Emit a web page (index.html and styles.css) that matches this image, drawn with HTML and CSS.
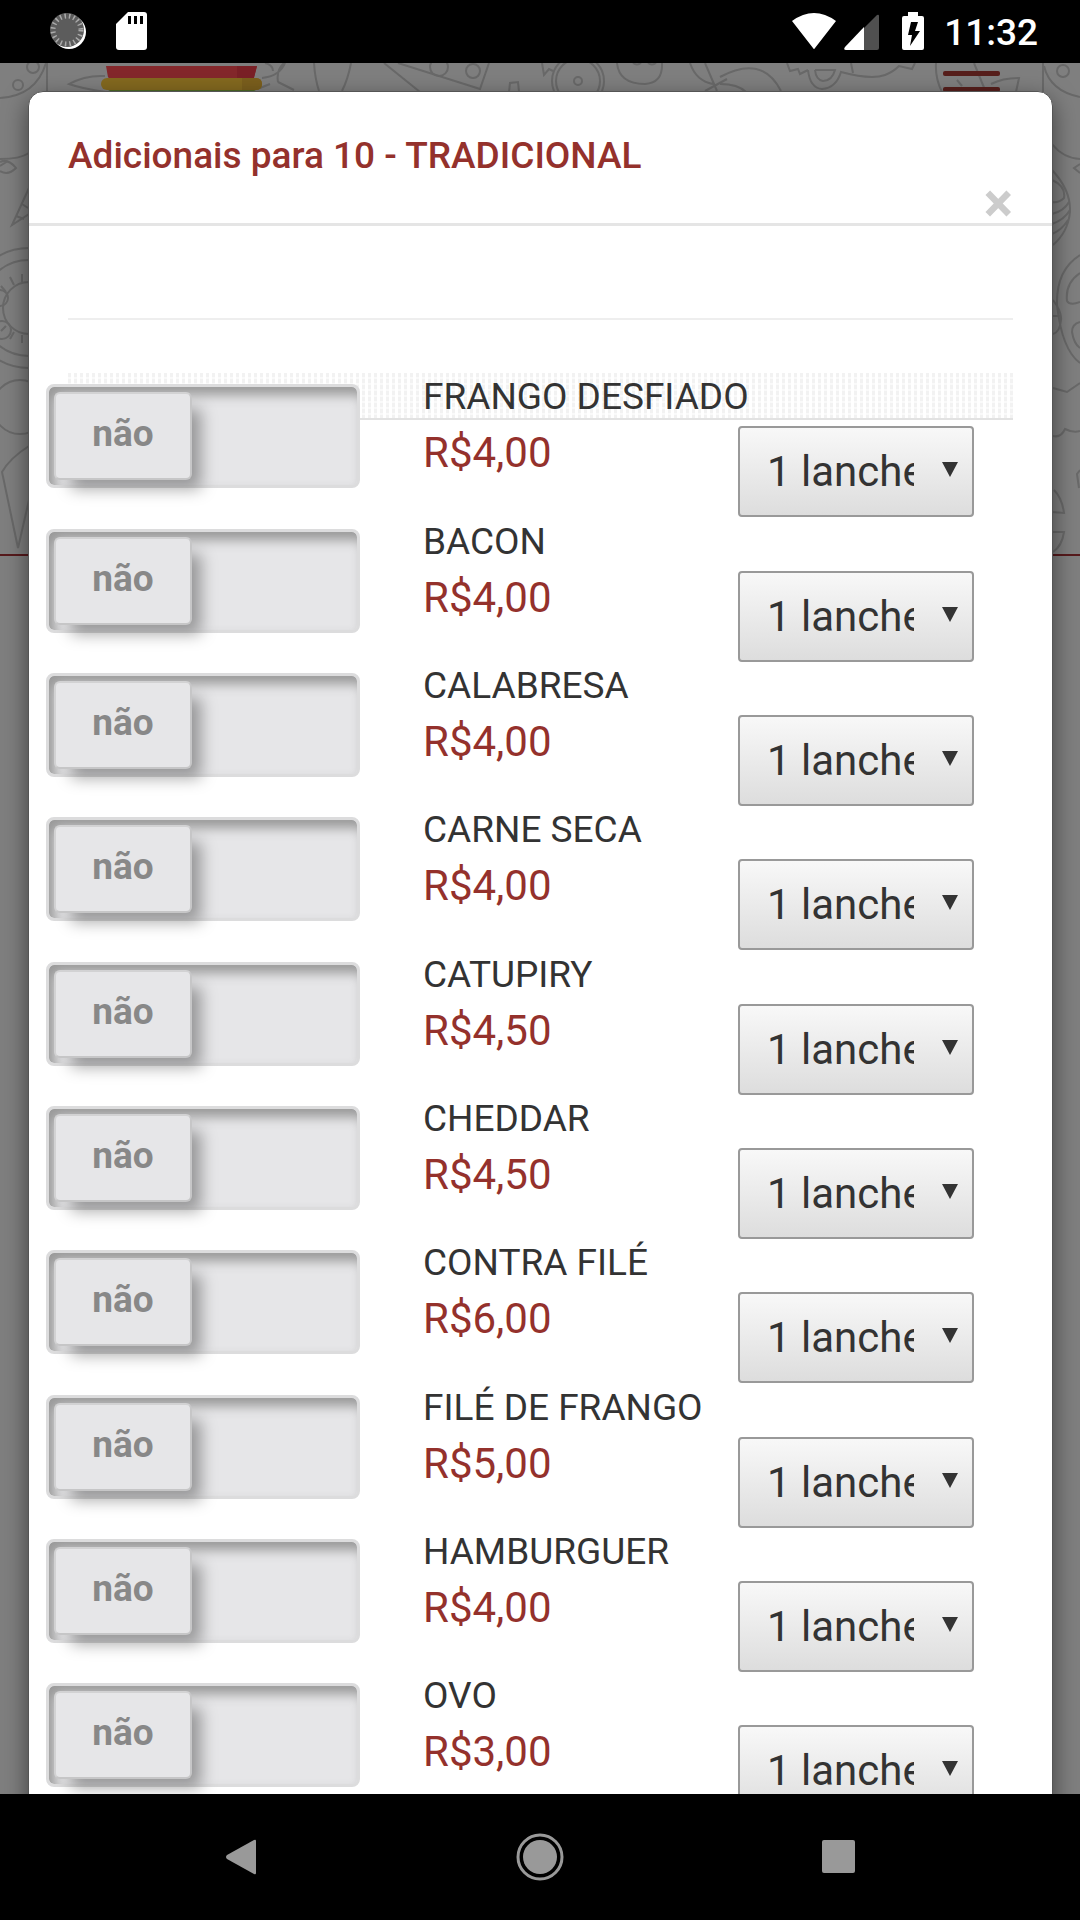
FILE: index.html
```html
<!DOCTYPE html>
<html lang="pt-BR">
<head>
    <meta charset="UTF-8">
    <meta name="viewport" content="width=device-width, initial-scale=1.0">
    <title>Adicionais</title>
    <link rel="stylesheet" href="styles.css">
</head>
<body>
    <div class="status-bar">
        <svg class="status-left" width="120" height="63" viewBox="40 0 120 63">
            <circle cx="69" cy="32" r="17" fill="#fff"/>
            <circle cx="67" cy="30" r="17" fill="#5c5c5c"/>
            <circle cx="67" cy="30" r="14" fill="none" stroke="#aaa" stroke-width="5" stroke-dasharray="1.5 3"/>
            <path d="M128 12h16q3 0 3 3v32q0 3-3 3h-25q-3 0-3-3V24z" fill="#fff"/>
            <path d="M128 16h3v8h-3zM134 16h3v8h-3zM140 16h3v8h-3z" fill="#000"/>
        </svg>
        <div class="status-right">
            <svg width="136" height="63" viewBox="790 0 136 63">
                <path d="M792 21Q814 5 836 21L815 48q-1 2-2 0z" fill="#fff"/>
                <path d="M877 15q2-1 2 1v32q0 2-2 2h-13V28z" fill="#505050"/>
                <path d="M864 27v23h-18q-3 0-1-3z" fill="#fff"/>
                <path d="M908 12h10v4h4q2 0 2 2v30q0 2-2 2h-18q-2 0-2-2V18q0-2 2-2h4z" fill="#fff"/>
                <path d="M911 22h7l-3 9h5l-10 15 2-11h-4z" fill="#000"/>
            </svg>
            <span class="clock">11:32</span>
        </div>
    </div>

    <main class="screen">
        <header class="site-header">
            <svg class="doodles" viewBox="0 63 1080 492" preserveAspectRatio="xMidYMin slice">
                <path d="M0 98Q36 96 46 63M47 63V92M105 92Q80 88 69 84 85 75 105 76M265 63q8 2 8 8M262 78q18-2 23-15M260 88l10-4M278 82l16 8M278 82q-2-12 6-19M314 63q1 16 5 28M351 63q-3 16-9 28"/>
                <circle cx="33" cy="67" r="6"/>
                <circle cx="18" cy="85" r="5"/>
                <path d="M0 159Q20 159 29 153M0 162Q8 158 16 168 8 176 0 171M0 166l8-5M29 188L12 225 29 214M16 216l8 3M22 204l6 4"/>
                <circle cx="29" cy="308" r="60"/>
                <circle cx="29" cy="308" r="48"/>
                <circle cx="29" cy="308" r="26"/>
                <circle cx="0" cy="298" r="8"/>
                <circle cx="2" cy="330" r="9"/>
                <path d="M22 282v-8M14 285l-4-8M6 292l-5-6M22 335v8M14 332l-4 7M6 326l-5 5"/>
                <circle cx="20" cy="407" r="27"/>
                <path d="M29 446Q10 458 2 472L18 548 29 500"/>
                <path d="M384 63L420 92M398 63L480 89 489 63M509 92l1-9 8-1 1 10M542 63l2 12 5-6 4 2"/>
                <circle cx="439" cy="67" r="9"/>
                <circle cx="473" cy="71" r="7"/>
                <circle cx="578" cy="81" r="26"/>
                <circle cx="578" cy="81" r="22"/>
                <circle cx="578" cy="81" r="4"/>
                <path d="M617 63q2 21 28 21 18-1 17-21M633 63q4 3 8 0M648 63q4 3 8 0M690 63q6 18 23 21M705 63l12 28M705 91l22-12"/>
                <path d="M720 77Q762 54 781 91M720 84q18 0 26 8M787 63l3 8 8-2 2 5 8-4M808 70q2 18 14 19 14-1 19-17 30 8 44 3 8-3 14-9l13 3 3-6M851 63l2 10M815 70h20q-3 11-12 11-7-1-8-11"/>
                <path d="M936 63q-1 15 6 29M957 80l5 6M974 63l11 27M991 84q12-6 28-6l-3 14M1043 63v29M1044 66q6 25 36 31"/>
                <circle cx="1063" cy="71" r="6"/>
                <path d="M1052 144q11 14 28 15M1080 164l-6 4 6 5M1052 170q19 20 18 42-2 20-17 33M1052 180q14 6 12 18-5 5-12 4M1052 214q12-3 17-12M1052 224q12-4 18-14M1052 234q10-4 16-14"/>
                <path d="M1080 255q-24 15-23 50 5 45 23 58M1080 273q-15 10-13 28 3 5 13 1M1080 322q-8 2-8 10 2 12 8 16M1053 300q9 12 8 20-1 12-8 14M1053 316l8 0M1053 388l14 4 13-9M1053 436q8 2 12-7 8 4 15 2M1080 470l-3 4 2 14M1054 490q8 8 10 23l-12-1M1053 532h11q-2 14-11 20"/>
            </svg>
            <div class="header-inner">
                <svg class="logo" width="162" height="30" viewBox="101 63 162 30">
                    <path d="M106 66h151l-3 11q-1 2-3 2H111q-2 0-3-2z" fill="#84272b"/>
                    <path d="M237 66h20l-3 12h-17z" fill="#7a2026"/>
                    <rect x="101" y="78" width="161" height="12" rx="6" fill="#84691f"/>
                    <path d="M242 78h14q6 0 6 6t-6 6h-14z" fill="#7b5f1d"/>
                    <path d="M108 90h148l-6 3H114z" fill="#4e6a25"/>
                </svg>
                <button class="menu-btn" aria-label="Menu"><span></span><span></span></button>
            </div>
        </header>

        <section class="modal" role="dialog" aria-labelledby="modal-title">
            <div class="modal-header">
                <h4 class="modal-title" id="modal-title">Adicionais para 10 - TRADICIONAL</h4>
                <button class="close" aria-label="Fechar">×</button>
            </div>
            <div class="modal-body">
                <hr>
                <div class="extras">
                    <div class="extra">
                        <label class="switch"><input type="checkbox" id="extra1"><span>não</span></label>
                        <div class="info">
                            <label class="name" for="extra1">FRANGO DESFIADO</label>
                            <p class="price">R$4,00</p>
                        </div>
                        <div class="qty"><select aria-label="Quantidade de frango desfiado"><option>1 lanche</option></select></div>
                    </div>
                    <div class="extra">
                        <label class="switch"><input type="checkbox" id="extra2"><span>não</span></label>
                        <div class="info">
                            <label class="name" for="extra2">BACON</label>
                            <p class="price">R$4,00</p>
                        </div>
                        <div class="qty"><select aria-label="Quantidade de bacon"><option>1 lanche</option></select></div>
                    </div>
                    <div class="extra">
                        <label class="switch"><input type="checkbox" id="extra3"><span>não</span></label>
                        <div class="info">
                            <label class="name" for="extra3">CALABRESA</label>
                            <p class="price">R$4,00</p>
                        </div>
                        <div class="qty"><select aria-label="Quantidade de calabresa"><option>1 lanche</option></select></div>
                    </div>
                    <div class="extra">
                        <label class="switch"><input type="checkbox" id="extra4"><span>não</span></label>
                        <div class="info">
                            <label class="name" for="extra4">CARNE SECA</label>
                            <p class="price">R$4,00</p>
                        </div>
                        <div class="qty"><select aria-label="Quantidade de carne seca"><option>1 lanche</option></select></div>
                    </div>
                    <div class="extra">
                        <label class="switch"><input type="checkbox" id="extra5"><span>não</span></label>
                        <div class="info">
                            <label class="name" for="extra5">CATUPIRY</label>
                            <p class="price">R$4,50</p>
                        </div>
                        <div class="qty"><select aria-label="Quantidade de catupiry"><option>1 lanche</option></select></div>
                    </div>
                    <div class="extra">
                        <label class="switch"><input type="checkbox" id="extra6"><span>não</span></label>
                        <div class="info">
                            <label class="name" for="extra6">CHEDDAR</label>
                            <p class="price">R$4,50</p>
                        </div>
                        <div class="qty"><select aria-label="Quantidade de cheddar"><option>1 lanche</option></select></div>
                    </div>
                    <div class="extra">
                        <label class="switch"><input type="checkbox" id="extra7"><span>não</span></label>
                        <div class="info">
                            <label class="name" for="extra7">CONTRA FILÉ</label>
                            <p class="price">R$6,00</p>
                        </div>
                        <div class="qty"><select aria-label="Quantidade de contra filé"><option>1 lanche</option></select></div>
                    </div>
                    <div class="extra">
                        <label class="switch"><input type="checkbox" id="extra8"><span>não</span></label>
                        <div class="info">
                            <label class="name" for="extra8">FILÉ DE FRANGO</label>
                            <p class="price">R$5,00</p>
                        </div>
                        <div class="qty"><select aria-label="Quantidade de filé de frango"><option>1 lanche</option></select></div>
                    </div>
                    <div class="extra">
                        <label class="switch"><input type="checkbox" id="extra9"><span>não</span></label>
                        <div class="info">
                            <label class="name" for="extra9">HAMBURGUER</label>
                            <p class="price">R$4,00</p>
                        </div>
                        <div class="qty"><select aria-label="Quantidade de hamburguer"><option>1 lanche</option></select></div>
                    </div>
                    <div class="extra">
                        <label class="switch"><input type="checkbox" id="extra10"><span>não</span></label>
                        <div class="info">
                            <label class="name" for="extra10">OVO</label>
                            <p class="price">R$3,00</p>
                        </div>
                        <div class="qty"><select aria-label="Quantidade de ovo"><option>1 lanche</option></select></div>
                    </div>
                </div>
            </div>
        </section>
    </main>

    <nav class="nav-bar">
        <button aria-label="Voltar">
            <svg width="48" height="48" viewBox="0 0 48 48"><path d="M37 7q2-1 2 1v32q0 2-2 1L10 26q-2-2 0-4z" fill="#999"/></svg>
        </button>
        <button aria-label="Início">
            <svg width="48" height="48" viewBox="0 0 48 48"><circle cx="24" cy="24" r="22" fill="none" stroke="#999" stroke-width="3"/><circle cx="24" cy="24" r="17" fill="#999"/></svg>
        </button>
        <button aria-label="Recentes">
            <svg width="48" height="48" viewBox="0 0 48 48"><rect x="7" y="7" width="33" height="33" rx="2" fill="#999"/></svg>
        </button>
    </nav>
</body>
</html>
```
FILE: styles.css
```css
* {
    box-sizing: border-box;
    margin: 0;
    padding: 0;
    font-family: 'Roboto', sans-serif;
}

body {
    display: flex;
    flex-direction: column;
    height: 100vh;
    overflow: hidden;
    background: #000;
    color: #333;
}

button {
    background: none;
    border: none;
    cursor: pointer;
}

.status-bar {
    display: flex;
    justify-content: space-between;
    height: 63px;
    padding: 0 42px 0 40px;
    background: #000;
}

.status-right {
    display: flex;
    gap: 18px;
}

.clock {
    color: #fff;
    font-size: 37px;
    font-weight: 500;
    line-height: 66px;
}

.screen {
    position: relative;
    flex: 1;
    overflow: hidden;
    background: #7f7f7f;
}

/* page behind the dialog */
.site-header {
    position: relative;
    height: 493px;
    border-bottom: 2px solid #571a1c;
}

.doodles {
    position: absolute;
    top: 0;
    left: 0;
    width: 100%;
    height: 100%;
    fill: none;
    stroke: #696969;
    stroke-width: 2;
}

.header-inner {
    position: relative;
    display: flex;
    justify-content: space-between;
    align-items: flex-start;
    padding: 0 80px 0 101px;
}

.menu-btn {
    display: flex;
    flex-direction: column;
    gap: 11px;
    padding-top: 8px;
}

.menu-btn span {
    width: 57px;
    height: 5px;
    border-radius: 2px;
    background: #571f1c;
}

/* dialog */
.modal {
    position: absolute;
    top: 28px;
    left: 28px;
    right: 27px;
    background: #fff;
    border: 1px solid #555;
    border-radius: 15px;
    box-shadow: 0 8px 24px rgba(0, 0, 0, 0.5);
}

.modal-header {
    display: flex;
    flex-direction: column;
    padding: 38px 39px 0;
    border-bottom: 3px solid #e5e5e5;
}

.modal-title {
    color: #94312c;
    font-size: 37px;
    font-weight: 500;
    line-height: 52px;
}

.close {
    align-self: flex-end;
    height: 41px;
    color: #ccc;
    font-size: 55px;
    font-weight: 700;
    line-height: 36px;
}

.modal-body {
    padding: 92px 39px 0;
}

.modal-body hr {
    border: none;
    border-top: 2px solid #eee;
    margin-bottom: 53px;
}

.extras {
    position: relative;
}

.extras::before {
    content: '';
    position: absolute;
    top: 0;
    left: 0;
    right: 0;
    height: 45px;
    border-bottom: 2px solid #e2e2e2;
    background:
        repeating-linear-gradient(to bottom, transparent 0 4px, rgba(255, 255, 255, 0.6) 4px 6px),
        repeating-linear-gradient(to right, #f2f2f2 0 3px, #fff 3px 6px);
}

.extra {
    position: relative;
    display: grid;
    grid-template-columns: 1fr 315px 236px;
    align-items: start;
    height: 144px;
    margin: 0 -23px 0 -22px;
    padding-right: 62px;
}

.extra:nth-child(3n + 1) {
    height: 145px;
}

.switch {
    position: relative;
    display: block;
    width: 314px;
    max-width: 90%;
    height: 104px;
    margin-top: 11px;
    padding: 5px;
    border: 3px solid #dcdcdd;
    border-radius: 8px;
    background: #e6e6e8;
    box-shadow: inset 6px 8px 12px #999;
    cursor: pointer;
}

.switch input {
    position: absolute;
    opacity: 0;
}

.switch span {
    display: block;
    width: 138px;
    height: 88px;
    border: 2px solid #c6c6c7;
    border-top-color: #d2d2d3;
    border-left-color: #d2d2d3;
    border-radius: 6px;
    background: #e6e6e8;
    box-shadow: 13px 13px 16px -4px rgba(0, 0, 0, 0.35);
    color: #888;
    font-size: 37px;
    font-weight: 700;
    line-height: 80px;
    text-align: center;
}

.switch input:checked + span {
    margin-left: auto;
}

.name {
    display: block;
    font-size: 37px;
    line-height: 48px;
    white-space: nowrap;
}

.price {
    color: #94312c;
    font-size: 42px;
    line-height: 64px;
}

.qty {
    position: relative;
    margin-top: 53px;
}

.qty select {
    appearance: none;
    display: block;
    width: 100%;
    height: 91px;
    padding: 0 58px 0 27px;
    border: 2px solid #999;
    border-radius: 4px;
    background: linear-gradient(#f8f8f8, #ddd);
    color: #333;
    font-size: 42px;
}

.qty::after {
    content: '';
    position: absolute;
    top: 36px;
    right: 16px;
    border: 8px solid transparent;
    border-top: 15px solid #333;
    border-bottom: none;
    pointer-events: none;
}

.nav-bar {
    display: grid;
    grid-template-columns: repeat(3, 1fr);
    height: 126px;
    padding: 0 92px;
    background: #000;
}

.nav-bar button {
    display: flex;
    align-items: center;
    justify-content: center;
}
```
